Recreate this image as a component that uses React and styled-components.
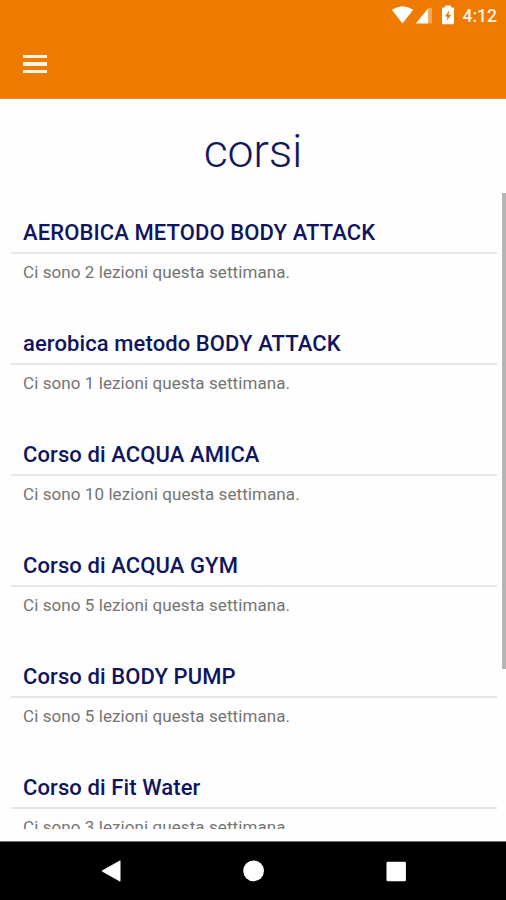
import React from 'react'
import styled, { createGlobalStyle } from 'styled-components'

const GlobalStyle = createGlobalStyle`
    * {
        box-sizing: border-box;
    }

    body {
        margin: 0;
        background: #fefefe;
        font-family: Roboto, "Liberation Sans", sans-serif;
    }
`

const Screen = styled.div`
    display: flex;
    flex-direction: column;
    width: 506px;
    height: 900px;
    overflow: hidden;
    background: #fefefe;
`

const Header = styled.header`
    flex: none;
    height: 99px;
    background: #ee7b00;
    border-bottom: 1px solid #e58636;
`

const StatusBar = styled.div`
    display: flex;
    align-items: center;
    justify-content: flex-end;
    height: 32px;
    padding-right: 9px;
`

const Clock = styled.span`
    margin-left: 6px;
    color: #fdf0e2;
    font-size: 17.5px;
    font-weight: 500;
    line-height: 32px;
`

const MenuButton = styled.button`
    display: flex;
    flex-direction: column;
    gap: 4px;
    width: 24px;
    margin: 23px 0 0 23px;
    padding: 0;
    border: 0;
    background: none;
`

const MenuLine = styled.span`
    height: 3.4px;
    background: #fff3e6;
`

const PageTitle = styled.h1`
    flex: none;
    height: 94px;
    margin: 0;
    color: #14195c;
    font-size: 46.5px;
    font-weight: 300;
    line-height: 104px;
    letter-spacing: -0.2px;
    text-align: center;
`

const ListArea = styled.main`
    display: flex;
    flex: none;
    justify-content: space-between;
    height: 636px;
    overflow: hidden;
`

const List = styled.ul`
    width: 486px;
    margin: 19px 0 0 11px;
    padding: 0;
    list-style: none;
`

const Course = styled.li`
    height: 111.1px;
`

const CourseName = styled.h2`
    height: 42px;
    margin: 0;
    padding-left: 12px;
    border-bottom: 2px solid #e6e6e6;
    color: #0f1560;
    font-size: 22px;
    font-weight: 500;
    line-height: 41px;
    letter-spacing: 0.1px;
    white-space: nowrap;
`

const Lessons = styled.p`
    margin: 0;
    padding-left: 12px;
    color: #747474;
    font-size: 17px;
    line-height: 36px;
    letter-spacing: 0.08px;
`

const ScrollThumb = styled.div`
    width: 4px;
    height: 476px;
    background: #b5b5b5;
`

const NavBar = styled.nav`
    display: flex;
    align-items: center;
    justify-content: space-between;
    height: 59px;
    margin-top: auto;
    padding: 0 99px 0 101px;
    border-top: 1px solid #6c6c6c;
    background: #000;
`

const courses = [
    { name: 'AEROBICA METODO BODY ATTACK', lessons: 2 },
    { name: 'aerobica metodo BODY ATTACK', lessons: 1 },
    { name: 'Corso di ACQUA AMICA', lessons: 10 },
    { name: 'Corso di ACQUA GYM', lessons: 5 },
    { name: 'Corso di BODY PUMP', lessons: 5 },
    { name: 'Corso di Fit Water', lessons: 3 },
]

const StatusIcons = () => (
    <svg width="66" height="32" viewBox="0 0 66 32" fill="#fff">
        <path d="M0.8 9.8Q11.5 2.6 22.2 9.8L11.5 23.4Z" />
        <path d="M37.2 8.2V23.6H24.8Z" />
        <path d="M37.2 8.2L41 7.4V23.6H37.2Z" fillOpacity="0.35" />
        <path fillRule="evenodd" d="M54 5.6H60V7.4H62.4Q63 7.4 63 8V23.6Q63 24.2 62.4 24.2H51.6Q51 24.2 51 23.6V8Q51 7.4 51.6 7.4H54ZM58.2 10.4L53.9 16.4H56.4L55.8 20.6L60.2 14.9H57.6Z" />
    </svg>
)

const App = () => {
    return (
        <>
            <GlobalStyle />
            <Screen>
                <Header>
                    <StatusBar>
                        <StatusIcons />
                        <Clock>4:12</Clock>
                    </StatusBar>
                    <MenuButton aria-label="Menu">
                        <MenuLine />
                        <MenuLine />
                        <MenuLine />
                    </MenuButton>
                </Header>
                <PageTitle>corsi</PageTitle>
                <ListArea>
                    <List>
                        {courses.map((course) => (
                            <Course key={course.name}>
                                <CourseName>{course.name}</CourseName>
                                <Lessons>Ci sono {course.lessons} lezioni questa settimana.</Lessons>
                            </Course>
                        ))}
                    </List>
                    <ScrollThumb />
                </ListArea>
                <NavBar>
                    <svg width="20" height="22" viewBox="0 0 20 22" fill="#fff">
                        <path d="M18.4 0.8Q19.5 0.2 19.5 1.5V20.5Q19.5 21.8 18.4 21.2L1.5 11.8Q0.2 11 1.5 10.2Z" />
                    </svg>
                    <svg width="22" height="22" viewBox="0 0 22 22" fill="#fff">
                        <circle cx="10.6" cy="10.8" r="10.4" />
                    </svg>
                    <svg width="21" height="21" viewBox="0 0 21 21" fill="#fff">
                        <rect x="0.5" y="0.8" width="19.4" height="19.4" rx="1.3" />
                    </svg>
                </NavBar>
            </Screen>
        </>
    )
}

export default App
